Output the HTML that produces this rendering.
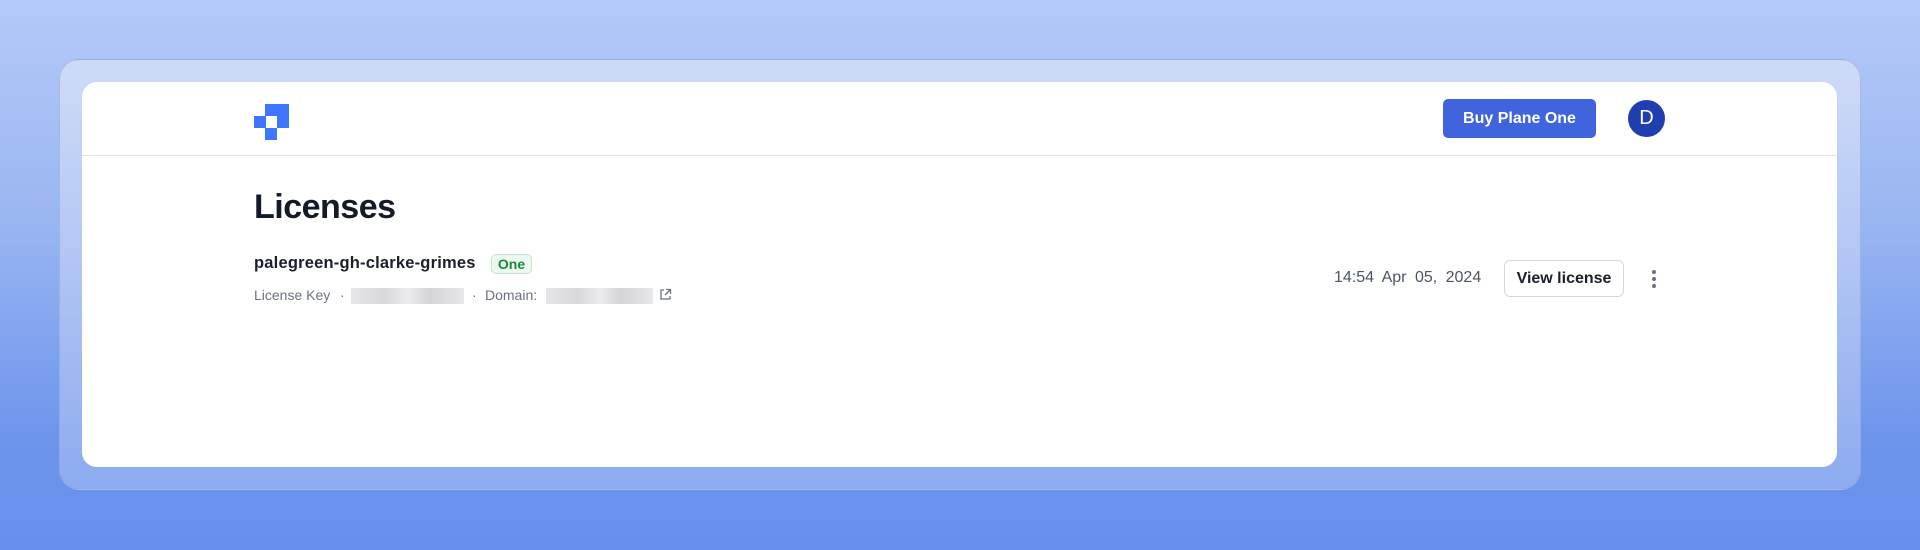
<!DOCTYPE html>
<html><head><meta charset="utf-8"><style>
*{box-sizing:border-box;margin:0;padding:0}
body{width:1920px;height:550px;overflow:hidden;font-family:"Liberation Sans",sans-serif;background:linear-gradient(180deg,#b4c9f7 0%,#9ab6f2 40%,#6d95ec 80%,#6690ec 100%);position:relative}
.frame{position:absolute;left:59px;top:59px;width:1802px;height:431px;border-radius:20px;background:linear-gradient(180deg,rgba(215,225,248,.8),rgba(150,178,240,.8));border:1px solid rgba(140,160,210,.5)}
.card{position:absolute;left:82px;top:82px;width:1755px;height:385px;border-radius:15px;background:#fff;overflow:hidden}
.hdr{position:absolute;left:0;top:0;right:0;height:74px;border-bottom:1.5px solid #e2e4e8}
.sq{position:absolute;width:12px;height:12px;background:#3f76ff}
.buy{position:absolute;left:1361px;top:17px;width:153px;height:39px;background:#4064dd;border-radius:5px;color:#fff;font-weight:bold;font-size:16px;line-height:39px;text-align:center}
.av{position:absolute;left:1546px;top:18px;width:37px;height:37px;border-radius:50%;background:#1f3fae;color:#fff;font-size:20px;line-height:37px;text-align:center}
h1{position:absolute;left:172px;top:106px;font-size:34px;font-weight:bold;color:#151a28;letter-spacing:-.5px}
.name{position:absolute;left:172px;top:172px;font-size:16.5px;font-weight:bold;color:#1a1f2c;letter-spacing:.2px}
.badge{position:absolute;left:409px;top:172px;width:41px;height:20px;border:1px solid #bfe6c8;background:#ecf9ef;border-radius:5px;color:#1b8a3a;font-size:14px;line-height:18px;text-align:center;font-weight:bold}
.sub{position:absolute;left:172px;top:205px;font-size:14px;color:#6b7280;white-space:nowrap}
.blur{position:absolute;height:16px;background:linear-gradient(90deg,#e6e6ea,#d8d8dc 30%,#ececee 50%,#d4d4d8 70%,#e8e8ec)}
.date{position:absolute;left:1252px;top:187px;font-size:16px;color:#4b5563;word-spacing:4px}
.vl{position:absolute;left:1422px;top:178px;width:120px;height:37px;border:1px solid #d4d7dd;border-radius:6px;font-size:16px;font-weight:bold;color:#1a1f2c;line-height:35px;text-align:center}
.dot{position:absolute;left:1570px;width:4px;height:4px;border-radius:50%;background:#6b7280}
</style></head><body>
<div class="frame"></div>
<div class="card">
<div class="hdr">
<div class="sq" style="left:172px;top:34px"></div>
<div class="sq" style="left:183px;top:22px"></div>
<div class="sq" style="left:195px;top:22px"></div>
<div class="sq" style="left:195px;top:34px"></div>
<div class="sq" style="left:183px;top:46px"></div>
<div class="buy">Buy Plane One</div>
<div class="av">D</div>
</div>
<h1>Licenses</h1>
<div class="name">palegreen-gh-clarke-grimes</div>
<div class="badge">One</div>
<div class="sub">License Key</div>
<div class="sub" style="left:258px">·</div>
<div class="blur" style="left:269px;top:206px;width:113px"></div>
<div class="sub" style="left:390px">·</div>
<div class="sub" style="left:403px">Domain:</div>
<div class="blur" style="left:464px;top:206px;width:107px"></div>
<svg style="position:absolute;left:577px;top:206px" width="13" height="13" viewBox="0 0 13 13" fill="none" stroke="#6b7280" stroke-width="1.3"><path d="M5 2H2v9h9V8M7 1.5h4.5V6M11.5 1.5 6 7"/></svg>
<div class="date">14:54 Apr 05, 2024</div>
<div class="vl">View license</div>
<div class="dot" style="top:188px"></div>
<div class="dot" style="top:195px"></div>
<div class="dot" style="top:202px"></div>
</div>
</body></html>
